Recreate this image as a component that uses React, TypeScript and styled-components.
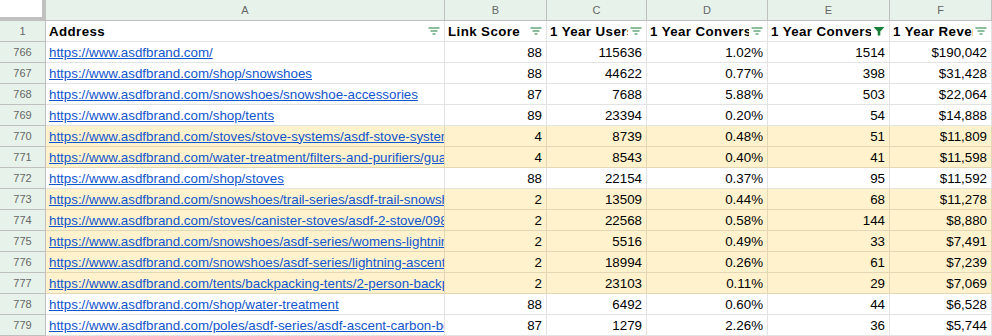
import styled, { createGlobalStyle } from "styled-components"

const GlobalStyle = createGlobalStyle`
    body {
        margin: 0;
        background: #fff;
        font-family: "Liberation Sans", Arial, sans-serif;
    }
`

const COLS = "46px 399px 102px 100px 121px 122px 1fr"
const GRID = "rgba(0, 0, 0, 0.11)"
const HEAD_LINE = "#c0c0c0"
const HEAD_BG = "#e7f3ea"

type Row = {
    n: number
    path: string
    score: number
    users: number
    rate: string
    conv: number
    revenue: string
    flagged?: boolean
}

const rows: Row[] = [
    { n: 766, path: "", score: 88, users: 115636, rate: "1.02%", conv: 1514, revenue: "$190,042" },
    { n: 767, path: "shop/snowshoes", score: 88, users: 44622, rate: "0.77%", conv: 398, revenue: "$31,428" },
    { n: 768, path: "snowshoes/snowshoe-accessories", score: 87, users: 7688, rate: "5.88%", conv: 503, revenue: "$22,064" },
    { n: 769, path: "shop/tents", score: 89, users: 23394, rate: "0.20%", conv: 54, revenue: "$14,888" },
    { n: 770, path: "stoves/stove-systems/asdf-stove-system-kit", score: 4, users: 8739, rate: "0.48%", conv: 51, revenue: "$11,809", flagged: true },
    { n: 771, path: "water-treatment/filters-and-purifiers/guardian-purifier", score: 4, users: 8543, rate: "0.40%", conv: 41, revenue: "$11,598", flagged: true },
    { n: 772, path: "shop/stoves", score: 88, users: 22154, rate: "0.37%", conv: 95, revenue: "$11,592" },
    { n: 773, path: "snowshoes/trail-series/asdf-trail-snowshoes", score: 2, users: 13509, rate: "0.44%", conv: 68, revenue: "$11,278", flagged: true },
    { n: 774, path: "stoves/canister-stoves/asdf-2-stove/09876", score: 2, users: 22568, rate: "0.58%", conv: 144, revenue: "$8,880", flagged: true },
    { n: 775, path: "snowshoes/asdf-series/womens-lightning-ascent", score: 2, users: 5516, rate: "0.49%", conv: 33, revenue: "$7,491", flagged: true },
    { n: 776, path: "snowshoes/asdf-series/lightning-ascent-snowshoes", score: 2, users: 18994, rate: "0.26%", conv: 61, revenue: "$7,239", flagged: true },
    { n: 777, path: "tents/backpacking-tents/2-person-backpacking-tent", score: 2, users: 23103, rate: "0.11%", conv: 29, revenue: "$7,069", flagged: true },
    { n: 778, path: "shop/water-treatment", score: 88, users: 6492, rate: "0.60%", conv: 44, revenue: "$6,528" },
    { n: 779, path: "poles/asdf-series/asdf-ascent-carbon-bc-poles", score: 87, users: 1279, rate: "2.26%", conv: 36, revenue: "$5,744" },
]

const headers = [
    { label: "Address", active: false },
    { label: "Link Score", active: false },
    { label: "1 Year Users", active: false },
    { label: "1 Year Conversion Rate", active: false },
    { label: "1 Year Conversions", active: true },
    { label: "1 Year Revenue", active: false },
]

const Sheet = styled.div`
    width: 992px;
    height: 336px;
    overflow: hidden;
    font-size: 13.33px;
    color: #000;
`

const GridRow = styled.div<{ $h: number }>`
    display: grid;
    grid-template-columns: ${COLS};
    height: ${p => p.$h}px;
`

const Corner = styled.div`
    background: #fff;
    border-right: 4px solid ${HEAD_LINE};
    border-bottom: 4px solid ${HEAD_LINE};
`

const ColLetter = styled.div`
    background: ${HEAD_BG};
    border-right: 1px solid ${HEAD_LINE};
    border-bottom: 1px solid ${HEAD_LINE};
    color: #666;
    font-size: 11px;
    display: flex;
    align-items: center;
    justify-content: center;
`

const RowNum = styled.div`
    background: ${HEAD_BG};
    border-right: 1px solid ${HEAD_LINE};
    border-bottom: 1px solid ${HEAD_LINE};
    color: #666;
    font-size: 11px;
    display: flex;
    align-items: center;
    justify-content: center;
`

const Cell = styled.div<{ $flag?: boolean; $right?: boolean }>`
    background: ${p => (p.$flag ? "#fff2cc" : "#fff")};
    border-right: 1px solid ${GRID};
    border-bottom: 1px solid ${GRID};
    padding: 0 4px 0 3px;
    display: flex;
    align-items: center;
    justify-content: ${p => (p.$right ? "flex-end" : "flex-start")};
    white-space: nowrap;
    overflow: hidden;
    min-width: 0;
`

const HeadCell = styled(Cell)`
    font-weight: bold;
    letter-spacing: 0.4px;
    gap: 1px;
    padding-right: 3px;
`

const HeadText = styled.span`
    flex: 1;
    overflow: hidden;
    min-width: 0;
`

const Link = styled.a`
    color: #1155cc;
    text-decoration: underline;
`

const FilterIcon = ({ active }: { active: boolean }) =>
    active ? (
        <svg width="14" height="12" viewBox="0 0 14 12" style={{ flex: "none" }}>
            <path d="M1.5 2h11l-4.2 4.6v4h-2.6v-4z" fill="#188038" />
        </svg>
    ) : (
        <svg width="14" height="12" viewBox="0 0 14 12" style={{ flex: "none" }}>
            <path d="M1.5 3h11M3.5 6h7M5.5 9h3" stroke="#188038" strokeWidth="1.2" />
        </svg>
    )

const App = () => {
    return <Sheet>
        <GlobalStyle />
        <GridRow $h={21}>
            <Corner />
            {["A", "B", "C", "D", "E", "F"].map(l => <ColLetter key={l}>{l}</ColLetter>)}
        </GridRow>
        <GridRow $h={21}>
            <RowNum>1</RowNum>
            {headers.map(h => (
                <HeadCell key={h.label}>
                    <HeadText>{h.label}</HeadText>
                    <FilterIcon active={h.active} />
                </HeadCell>
            ))}
        </GridRow>
        {rows.map(r => (
            <GridRow $h={21} key={r.n}>
                <RowNum>{r.n}</RowNum>
                <Cell $flag={r.flagged}>
                    <Link href="#">{"https://www.asdfbrand.com/" + r.path}</Link>
                </Cell>
                <Cell $flag={r.flagged} $right>{r.score}</Cell>
                <Cell $flag={r.flagged} $right>{r.users}</Cell>
                <Cell $flag={r.flagged} $right>{r.rate}</Cell>
                <Cell $flag={r.flagged} $right>{r.conv}</Cell>
                <Cell $flag={r.flagged} $right>{r.revenue}</Cell>
            </GridRow>
        ))}
    </Sheet>
}

export default App
